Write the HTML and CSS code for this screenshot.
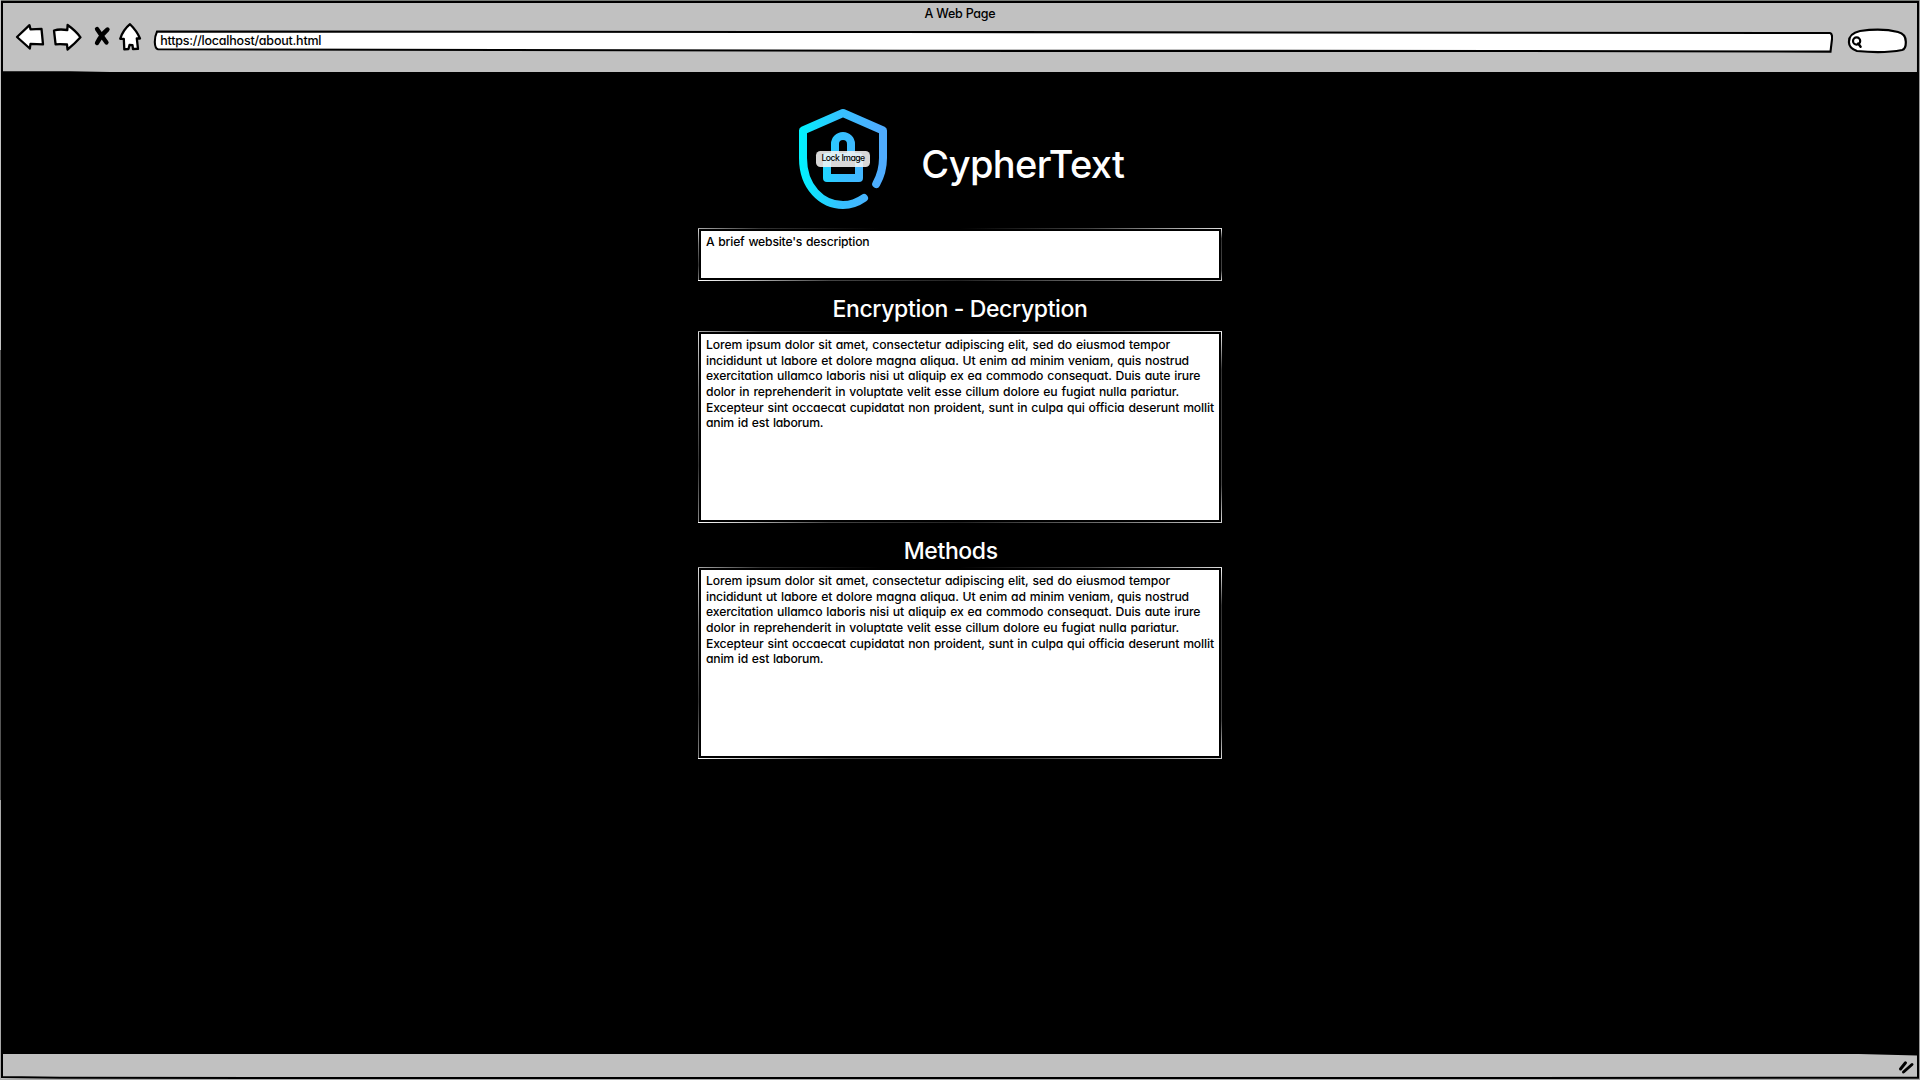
FILE: index.html
```html
<!DOCTYPE html>
<html lang="en">
<head>
<meta charset="utf-8">
<title>A Web Page</title>
<link rel="stylesheet" href="styles.css">
</head>
<body>
<div class="window">
  <header class="chrome">
    <div class="page-title">A Web Page</div>
    <div class="toolbar">
      <svg class="nav" width="142" height="40" viewBox="12 17 142 40">
        <g fill="#fff" stroke="#000" stroke-width="2.3" stroke-linejoin="round">
          <path d="M17 37 29.5 25.2 30.5 29.3 41.5 28.8 43 44.3 30.5 43.8 29.8 48.5Z"/>
          <path d="M54 30.5 Q59 28.8 67.3 30 L67.6 25 Q76 31 80.5 37.3 Q75 43.5 67.5 49.5 L67 44.5 Q60 44 55.6 44.4Z"/>
          <path d="M130 24.2 Q137 31 140 38.5 L136.8 38.3 138 48.8 133 49 132.5 45.2 129.5 45 128.5 49 124.3 49.3 123.8 38.8 120.2 38.8 Q123 30 130 24.2Z"/>
        </g>
        <path d="M97 29 Q101 35 106.5 42.5 M107.5 29.5 Q101 35 97 43" fill="none" stroke="#000" stroke-width="4.3" stroke-linecap="round"/>
      </svg>
      <div class="url">
        <svg class="url-outline" width="1680" height="26" viewBox="153 28 1680 26">
          <path d="M157 31.6 L900 32 1500 32.7 1830 33 Q1832.5 33.5 1832 39 L1830.5 51.6 1500 51 900 50.8 500 50 158 49.3 Q155 48.5 154.8 42 Q154.8 36 157 31.6Z" fill="#fff" stroke="#000" stroke-width="2.1"/>
        </svg>
        <span class="url-text">https://localhost/about.html</span>
      </div>
      <svg class="search" width="62" height="30" viewBox="1847 27 62 30">
        <path d="M1860 31 Q1882 28 1898 32 Q1906 34 1905.8 42 Q1906 49 1902 50 Q1884 53.5 1857 51 Q1848.5 48 1849 41.5 Q1849 33.5 1860 31Z" fill="#fff" stroke="#000" stroke-width="2.2"/>
        <circle cx="1856.6" cy="41" r="3.6" fill="none" stroke="#000" stroke-width="2.2"/>
        <path d="M1858.2 43.5 L1860.6 46.8" stroke="#000" stroke-width="2.4" stroke-linecap="round"/>
      </svg>
    </div>
  </header>

  <main class="content">
    <div class="brand">
      <div class="logo">
        <svg width="92" height="104" viewBox="797 107 92 104">
          <defs>
            <linearGradient id="shield" gradientUnits="userSpaceOnUse" x1="800" y1="0" x2="880" y2="0">
              <stop offset="0" stop-color="#00f2fe"/><stop offset="0.5" stop-color="#35c1ff"/><stop offset="1" stop-color="#4facfe"/>
            </linearGradient>
          </defs>
          <g fill="none" stroke="url(#shield)" stroke-width="8" stroke-linecap="round" stroke-linejoin="round">
            <path d="M876.2 184 Q883 172 883 158 V130.5 L843 113 803 130.5 V158 C803 187 822 205 843 205 Q854 205 864 198"/>
            <path d="M827 157 H859 V178 H827Z"/>
            <path d="M835 155 V144 A8 8 0 0 1 851 144 V155"/>
          </g>
        </svg>
        <span class="tag">Lock Image</span>
      </div>
      <h1>CypherText</h1>
    </div>
    <section class="box brief"><p>A brief website's description</p></section>
    <h2 class="encryption">Encryption - Decryption</h2>
    <section class="box long">
      <p>
        <span class="l1">Lorem ipsum dolor sit amet, consectetur adipiscing elit, sed do eiusmod tempor</span>
        <span class="l2">incididunt ut labore et dolore magna aliqua. Ut enim ad minim veniam, quis nostrud</span>
        <span class="l3">exercitation ullamco laboris nisi ut aliquip ex ea commodo consequat. Duis aute irure</span>
        <span class="l4">dolor in reprehenderit in voluptate velit esse cillum dolore eu fugiat nulla pariatur.</span>
        <span class="l5">Excepteur sint occaecat cupidatat non proident, sunt in culpa qui officia deserunt mollit</span>
        <span class="l6">anim id est laborum.</span>
      </p>
    </section>
    <h2 class="methods">Methods</h2>
    <section class="box long">
      <p>
        <span class="l1">Lorem ipsum dolor sit amet, consectetur adipiscing elit, sed do eiusmod tempor</span>
        <span class="l2">incididunt ut labore et dolore magna aliqua. Ut enim ad minim veniam, quis nostrud</span>
        <span class="l3">exercitation ullamco laboris nisi ut aliquip ex ea commodo consequat. Duis aute irure</span>
        <span class="l4">dolor in reprehenderit in voluptate velit esse cillum dolore eu fugiat nulla pariatur.</span>
        <span class="l5">Excepteur sint occaecat cupidatat non proident, sunt in culpa qui officia deserunt mollit</span>
        <span class="l6">anim id est laborum.</span>
      </p>
    </section>
  </main>

  <footer class="status">
    <svg width="22" height="20" viewBox="1896 1057 22 20">
      <path d="M1900.5 1069 L1905.5 1062.8 M1903.5 1072 L1912 1064.5" stroke="#000" stroke-width="3" stroke-linecap="round"/>
    </svg>
  </footer>

  <!-- hand-drawn window outline -->
  <svg class="frame" width="1920" height="1080" viewBox="0 0 1920 1080">
    <path d="M0 0.5 H1920" stroke="#777b77"/>
    <path d="M0.5 0 V350" stroke="#c4c4c4"/>
    <path d="M0.5 350 V800" stroke="#555"/>
    <path d="M0.5 800 V1080" stroke="#aaa"/>
    <path d="M1919.5 0 V1080" stroke="#999"/>
    <path d="M0 1079.5 H1920" stroke="#aaa"/>
    <path d="M2 2 H1918 L1917.7 540 1918 1077.8 960 1078 H500 L60 1077.8 2 1077 V540Z" fill="none" stroke="#000" stroke-width="2"/>
    <path d="M1820 1053 H1917 V1055.5Z M3 71.2 H70 L110 72 H3Z"/>
  </svg>
</div>
</body>
</html>
```
FILE: styles.css
```css
* { box-sizing: border-box; }

body {
  margin: 0;
  background: #000;
  color: #000;
  font: 500 12.5px/15.6px Inter, sans-serif;
  font-feature-settings: "cv11";
}

svg { display: block; flex: none; }

.window {
  position: relative;
  height: 1080px;
  display: flex;
  flex-direction: column;
  overflow: hidden;
}

.frame { position: absolute; left: 0; top: 0; pointer-events: none; }

/* browser bar */
.chrome { flex: none; height: 72px; padding-top: 5.6px; background: #c1c1c1; }
.page-title { height: 11.4px; text-align: center; letter-spacing: -0.23px; }
.toolbar { display: flex; align-items: flex-start; padding-left: 12px; }
.url { position: relative; width: 1680px; height: 26px; margin: 11px 0 0 -1px; padding: 4.6px 0 0 7.2px; }
.url-outline { position: absolute; left: 0; top: 0; }
.url-text { position: relative; display: block; letter-spacing: -0.22px; }
.search { margin: 10px 0 0 14px; }

/* page */
.content { flex: 1; display: flex; flex-direction: column; align-items: center; }
.brand { align-self: flex-start; display: flex; height: 156px; padding: 35px 0 0 797px; }
.logo { position: relative; width: 92px; height: 104px; }
.tag {
  position: absolute;
  left: 19px;
  top: 44px;
  width: 54px;
  height: 16px;
  border-radius: 4.5px;
  background: rgba(245, 245, 245, 0.88);
  font-size: 8.7px;
  line-height: 14px;
  letter-spacing: -0.6px;
  word-spacing: 0.6px;
  text-align: center;
  white-space: nowrap;
}
h1 { margin: 33px 0 0 32.3px; color: #fff; font-size: 38px; font-weight: 550; line-height: 48px; letter-spacing: -0.6px; }
h2 { margin: 0; padding-top: 12.6px; color: #fff; font-size: 23px; font-weight: 500; line-height: 30px; }
.encryption { height: 50px; letter-spacing: -0.36px; }
.methods { height: 44px; margin-left: -18.6px; letter-spacing: -0.4px; }

.box {
  width: 524px;
  padding: 6.2px 0 0 8px;
  font-size: 12.2px;
  word-spacing: 0.8px;
  background:
    linear-gradient(90deg, #aaa, #333 12%, #000 35%, #000 50%, #444 75%, #ddd) 0 0 / 100% 1px no-repeat,
    linear-gradient(90deg, #fff, #bbb 10%, #444 25%, #222 50%, #777 80%, #ccc) 0 100% / 100% 1px no-repeat,
    linear-gradient(#ddd, #777 30%, #333 70%, #888) 0 0 / 1px 100% no-repeat,
    linear-gradient(#fff, #333 20%, #444 80%, #ddd) 100% 0 / 1px 100% no-repeat,
    linear-gradient(#fff, #fff) 3px 3px / calc(100% - 6px) calc(100% - 6px) no-repeat,
    #000;
}
.brief { height: 53px; letter-spacing: -0.2px; }
.long { height: 192px; }
p { margin: 0; }
.long span { display: block; white-space: nowrap; }
.l1 { letter-spacing: -0.108px; }
.l2 { letter-spacing: -0.145px; }
.l3 { letter-spacing: -0.125px; }
.l4 { letter-spacing: -0.12px; }
.l5 { letter-spacing: -0.135px; }
.l6 { letter-spacing: -0.205px; }

/* status bar */
.status { flex: none; display: flex; justify-content: flex-end; height: 26px; padding: 3px 2px 0 0; background: #c1c1c1; }
```
